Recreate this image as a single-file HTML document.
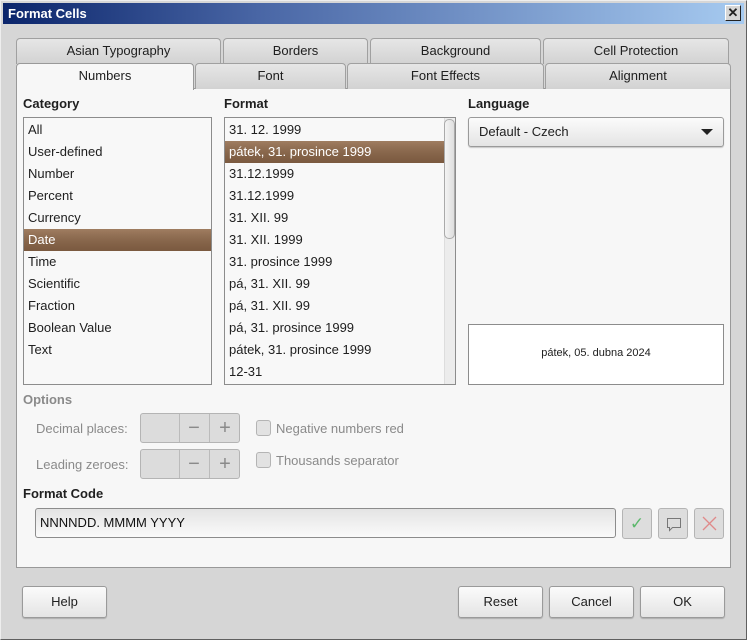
<!DOCTYPE html><html><head><style>
*{box-sizing:border-box}
body{margin:0;width:747px;height:640px;background:#d6d6d6;font-family:"Liberation Sans",sans-serif;font-size:13px;color:#202020;position:relative;overflow:hidden}
.a{position:absolute}
.tab{position:absolute;border:1px solid #a0a0a0;border-bottom:none;border-radius:4px 4px 0 0;background:linear-gradient(#e6e6e6,#d2d2d2);text-align:center;line-height:24px}
.box{position:absolute;border:1px solid #8c8c8c;background:#f8f8f8}
.it{position:absolute;left:4px;height:22px;line-height:22px;white-space:nowrap}
.sel{position:absolute;left:0;right:0;height:22px;background:linear-gradient(#a3806380,#7b5a40),linear-gradient(#9c7a5e,#7a5a41);color:#fff;line-height:22px;padding-left:4px}
.b{font-weight:bold}
.btn{position:absolute;border:1px solid #9a9a9a;border-radius:3px;background:linear-gradient(#fbfbfb,#e4e4e4);text-align:center;line-height:30px;box-shadow:0 1px 1px rgba(0,0,0,.2)}
.g{color:#8a8a8a}
.spin{position:absolute;width:100px;height:30px;border:1px solid #b4b4b4;border-radius:3px;background:#dcdcdc}
.cb{position:absolute;width:15px;height:16px;border:1px solid #b4b4b4;border-radius:3px;background:#e2e2e2}
</style></head><body>
<div class="a" style="left:0;top:0;width:747px;height:640px;border:1px solid #606060;border-top-color:#eee;border-left-color:#eee"></div>
<div class="a" style="left:3px;top:3px;width:741px;height:21px;background:linear-gradient(90deg,#0b256b,#4a67a6 35%,#a6caf0);color:#fff;font-weight:bold;line-height:21px;padding-left:5px">Format Cells</div>
<div class="a" style="left:725px;top:5px;width:16px;height:16px;background:#d6d6d6;border:1px solid #222;border-top-color:#fff;border-left-color:#fff;font-size:13px;line-height:13px;text-align:center;font-weight:bold">✕</div>

<div class="tab" style="left:16px;top:38px;width:205px;height:26px">Asian Typography</div>
<div class="tab" style="left:223px;top:38px;width:145px;height:26px">Borders</div>
<div class="tab" style="left:370px;top:38px;width:171px;height:26px">Background</div>
<div class="tab" style="left:543px;top:38px;width:186px;height:26px">Cell Protection</div>
<div class="box" style="left:16px;top:88px;width:715px;height:480px;border-color:#999;background:#f7f7f7"></div>
<div class="tab" style="left:195px;top:63px;width:151px;height:26px">Font</div>
<div class="tab" style="left:347px;top:63px;width:197px;height:26px">Font Effects</div>
<div class="tab" style="left:545px;top:63px;width:186px;height:26px">Alignment</div>
<div class="tab" style="left:16px;top:63px;width:178px;height:27px;background:#f7f7f7;border-color:#999">Numbers</div>

<div class="a b" style="left:23px;top:96px">Category</div>
<div class="a b" style="left:224px;top:96px">Format</div>
<div class="a b" style="left:468px;top:96px">Language</div>

<div class="box" style="left:23px;top:117px;width:189px;height:268px">
<div class="it" style="top:1px">All</div><div class="it" style="top:23px">User-defined</div><div class="it" style="top:45px">Number</div><div class="it" style="top:67px">Percent</div><div class="it" style="top:89px">Currency</div>
<div class="sel" style="top:111px">Date</div>
<div class="it" style="top:133px">Time</div><div class="it" style="top:155px">Scientific</div><div class="it" style="top:177px">Fraction</div><div class="it" style="top:199px">Boolean Value</div><div class="it" style="top:221px">Text</div>
</div>
<div class="box" style="left:224px;top:117px;width:232px;height:268px">
<div class="it" style="top:1px">31. 12. 1999</div>
<div class="sel" style="top:23px;right:11px">pátek, 31. prosince 1999</div>
<div class="it" style="top:45px">31.12.1999</div><div class="it" style="top:67px">31.12.1999</div><div class="it" style="top:89px">31. XII. 99</div><div class="it" style="top:111px">31. XII. 1999</div><div class="it" style="top:133px">31. prosince 1999</div><div class="it" style="top:155px">pá, 31. XII. 99</div><div class="it" style="top:177px">pá, 31. XII. 99</div><div class="it" style="top:199px">pá, 31. prosince 1999</div><div class="it" style="top:221px">pátek, 31. prosince 1999</div><div class="it" style="top:243px">12-31</div>
<div class="a" style="left:219px;top:0;width:11px;height:266px;background:#ececec;border-left:1px solid #ddd"></div>
<div class="a" style="left:219px;top:1px;width:11px;height:120px;border:1px solid #aaa;border-radius:5px;background:linear-gradient(90deg,#f4f4f4,#dedede)"></div>
</div>
<div class="btn" style="left:468px;top:117px;width:256px;height:30px;text-align:left;padding-left:10px;line-height:28px">Default - Czech<span class="a" style="right:10px;top:11px;border:6px solid transparent;border-top:6px solid #222;border-bottom:none"></span></div>
<div class="box" style="left:468px;top:324px;width:256px;height:61px;background:#fff;font-size:11px;text-align:center;line-height:57px">pátek, 05. dubna 2024</div>

<div class="a b g" style="left:23px;top:392px">Options</div>
<div class="a g" style="left:36px;top:421px">Decimal places:</div>
<div class="a g" style="left:36px;top:457px">Leading zeroes:</div>
<div class="spin" style="left:140px;top:413px"><div class="a" style="left:38px;top:0;width:1px;height:28px;background:#bbb"></div><div class="a" style="left:68px;top:0;width:1px;height:28px;background:#bbb"></div><div class="a g" style="left:38px;top:0;width:30px;line-height:28px;text-align:center;font-size:20px">−</div><div class="a g" style="left:69px;top:0;width:30px;line-height:28px;text-align:center;font-size:20px">+</div></div>
<div class="spin" style="left:140px;top:449px"><div class="a" style="left:38px;top:0;width:1px;height:28px;background:#bbb"></div><div class="a" style="left:68px;top:0;width:1px;height:28px;background:#bbb"></div><div class="a g" style="left:38px;top:0;width:30px;line-height:28px;text-align:center;font-size:20px">−</div><div class="a g" style="left:69px;top:0;width:30px;line-height:28px;text-align:center;font-size:20px">+</div></div>
<div class="cb" style="left:256px;top:420px"></div><div class="a g" style="left:276px;top:421px">Negative numbers red</div>
<div class="cb" style="left:256px;top:452px"></div><div class="a g" style="left:276px;top:453px">Thousands separator</div>

<div class="a b" style="left:23px;top:486px">Format Code</div>
<div class="a" style="left:35px;top:508px;width:581px;height:30px;border:1px solid #8c8c8c;border-radius:3px;background:linear-gradient(#e4e4e4,#fafafa);line-height:28px;padding-left:4px;color:#111">NNNNDD. MMMM YYYY</div>
<div class="a" style="left:622px;top:508px;width:30px;height:31px;border:1px solid #b4b4b4;border-radius:3px;background:#ddd;color:#5cb86c;text-align:center;line-height:29px;font-size:17px">✓</div>
<div class="a" style="left:658px;top:508px;width:30px;height:31px;border:1px solid #b4b4b4;border-radius:3px;background:#ddd"><svg width="30" height="30" class="a" style="left:0;top:0"><path d="M8.5 9.5h13v9h-8l-3 3v-3h-2z" fill="none" stroke="#777"/></svg></div>
<div class="a" style="left:694px;top:508px;width:30px;height:31px;border:1px solid #b4b4b4;border-radius:3px;background:#ddd"><svg width="30" height="30" class="a" style="left:0;top:0"><path d="M8 8l13 13M21 8L8 21" stroke="#e08a8a" stroke-width="1.3"/></svg></div>

<div class="btn" style="left:22px;top:586px;width:85px;height:32px">Help</div>
<div class="btn" style="left:458px;top:586px;width:85px;height:32px">Reset</div>
<div class="btn" style="left:549px;top:586px;width:85px;height:32px">Cancel</div>
<div class="btn" style="left:640px;top:586px;width:85px;height:32px">OK</div>
</body></html>
